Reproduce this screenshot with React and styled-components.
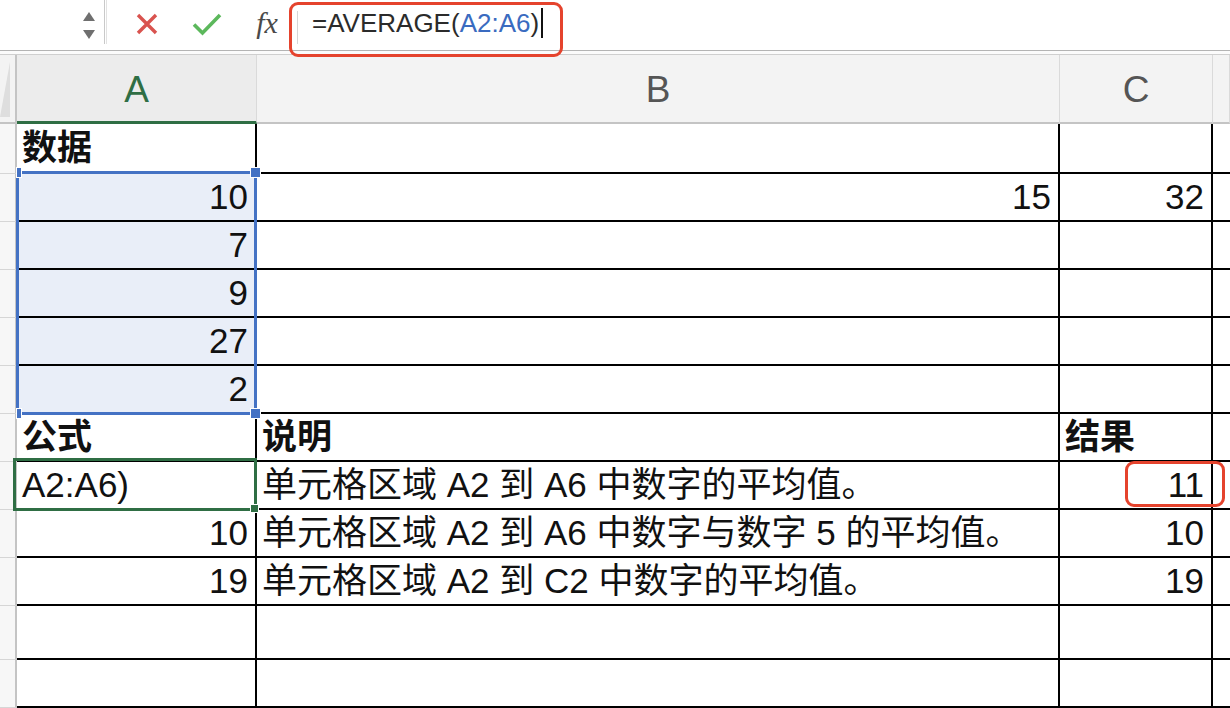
import React from "react";
import styled, { createGlobalStyle } from "styled-components";

const GlobalStyle = createGlobalStyle`
  html, body { margin: 0; padding: 0; background: #fff; overflow: hidden; }
  * { box-sizing: border-box; }
`;

const FONT = `"Liberation Sans", "Noto Sans CJK SC", Arial, sans-serif`;

const Page = styled.div`
  width: 1230px;
  height: 708px;
  display: flex;
  flex-direction: column;
  font-family: ${FONT};
  color: #111;
`;

const FormulaBar = styled.div`
  height: 51px;
  display: flex;
  align-items: stretch;
  background: #fff;
  border-bottom: 1px solid #b4b4b4;
  position: relative;
  z-index: 3;
`;

const NameBox = styled.div`
  width: 104px;
  display: flex;
  justify-content: flex-end;
  align-items: center;
  padding-right: 9px;
`;

const Spinner = styled.div`
  display: flex;
  flex-direction: column;
  gap: 9px;
  align-items: center;
`;

const Tri = styled.div`
  width: 0;
  height: 0;
  border-left: 6px solid transparent;
  border-right: 6px solid transparent;
  ${(p) => (p.$down ? "border-top: 9px solid #6f6f6f;" : "border-bottom: 9px solid #6f6f6f;")}
`;

const BarDivider = styled.div`
  width: 3px;
  margin-bottom: 6px;
  border-left: 1px solid #c9c9c9;
  border-right: 1px solid #e2e2e2;
`;

const ActionIcon = styled.div`
  width: 60px;
  display: flex;
  align-items: center;
  justify-content: center;
  padding-bottom: 2px;
  margin-left: ${(p) => p.$offset || 0}px;
`;

const Fx = styled.div`
  width: 40px;
  display: flex;
  align-items: center;
  justify-content: center;
  font-family: "Liberation Serif", "DejaVu Serif", serif;
  font-style: italic;
  font-size: 30px;
  color: #4a4a4a;
  padding-bottom: 5px;
  margin-left: 10px;
`;

const FormulaField = styled.div`
  position: relative;
  flex: 1;
  display: flex;
  align-items: center;
  padding-left: 15px;
  margin-left: 10px;
  font-family: ${FONT};
  font-size: 26px;
  color: #2b2b2b;
  padding-bottom: 4px;
  &::before {
    content: "";
    position: absolute;
    left: 0;
    top: 11px;
    bottom: 6px;
    border-left: 1px solid #d6d6d6;
  }
`;

const RangeRef = styled.span`
  color: #3a6bc0;
`;

const Caret = styled.span`
  display: inline-block;
  width: 2px;
  height: 30px;
  background: #111;
  margin-left: 2px;
  vertical-align: middle;
`;

const Highlight = styled.div`
  position: absolute;
  border: 3.5px solid #e5432d;
  border-radius: 9px;
  pointer-events: none;
`;

const FormulaHighlight = styled(Highlight)`
  left: -8px;
  top: 2px;
  width: 274px;
  height: 55px;
`;

const BarGap = styled.div`
  height: 4px;
  background: #fbfbfb;
  border-bottom: 1px solid #cfcfcf;
`;

const SheetWrap = styled.div`
  position: relative;
  flex: 1;
`;

const Grid = styled.div`
  display: grid;
  grid-template-columns: 17px 240px 803px 153px 1fr;
  grid-template-rows: 69px 50px repeat(9, 48px) 54px 48px;
`;

const Corner = styled.div`
  background: #f3f3f3;
  border-right: 2px solid #c4c4c4;
  border-bottom: 2px solid #c4c4c4;
  position: relative;
  &::after {
    content: "";
    position: absolute;
    right: 5px;
    bottom: 5px;
    width: 10px;
    height: 55px;
    background: #dedede;
    clip-path: polygon(100% 0, 100% 100%, 0 100%);
  }
`;

const ColHeader = styled.div`
  background: ${(p) => (p.$active ? "#ececec" : "#f3f3f3")};
  border-right: 1px solid #dadada;
  border-bottom: ${(p) => (p.$active ? "3px solid #2f6e44" : "2px solid #c4c4c4")};
  display: flex;
  align-items: center;
  justify-content: center;
  font-size: 37px;
  color: ${(p) => (p.$active ? "#2f6e44" : "#555")};
  padding-top: ${(p) => (p.$active ? "3px" : "2px")};
`;

const RowHeader = styled.div`
  background: #f7f7f7;
  border-right: 2px solid #c4c4c4;
  border-bottom: 1px solid #d6d6d6;
`;

const Cell = styled.div`
  display: flex;
  align-items: center;
  justify-content: ${(p) => (p.$align === "right" ? "flex-end" : "flex-start")};
  padding: 0 ${(p) => (p.$align === "right" ? "7px" : "4px")} 2px 5px;
  background: ${(p) => (p.$selected ? "#e9eef8" : "#fff")};
  border-right: ${(p) => (p.$edge ? "none" : "2px solid #000")};
  border-bottom: 2px solid #000;
  font-size: 35px;
  font-weight: ${(p) => (p.$bold ? 700 : 400)};
  white-space: nowrap;
  overflow: hidden;
  line-height: 1;
`;

const Selection = styled.div`
  position: absolute;
  left: 16px;
  top: 116px;
  width: 241px;
  height: 244px;
  border: 3px solid #4472c4;
  pointer-events: none;
`;

const Handle = styled.div`
  position: absolute;
  width: ${(p) => (p.$left ? "6px" : "11px")};
  height: 11px;
  background: #4472c4;
  border: 1px solid #fff;
  ${(p) => (p.$left ? "left: -3px;" : "right: -7px;")}
  ${(p) => (p.$bottom ? "bottom: -7px;" : "top: -7px;")}
`;

const ActiveCell = styled.div`
  position: absolute;
  left: 13px;
  top: 403px;
  width: 244px;
  height: 53px;
  border: 3px solid #2f6e44;
  pointer-events: none;
  &::after {
    content: "";
    position: absolute;
    right: -5px;
    bottom: -5px;
    width: 7px;
    height: 7px;
    background: #2f6e44;
    border: 1px solid #fff;
  }
`;

const ResultHighlight = styled(Highlight)`
  left: 1125px;
  top: 406px;
  width: 100px;
  height: 46px;
`;

const rows = [
  { a: "数据", aBold: true },
  { a: "10", b: "15", c: "32", sel: true },
  { a: "7", sel: true },
  { a: "9", sel: true },
  { a: "27", sel: true },
  { a: "2", sel: true },
  { a: "公式", b: "说明", c: "结果", aBold: true, bBold: true, cBold: true },
  { a: "A2:A6)", b: "单元格区域 A2 到 A6 中数字的平均值。", c: "11" },
  { a: "10", b: "单元格区域 A2 到 A6 中数字与数字 5 的平均值。", c: "10" },
  { a: "19", b: "单元格区域 A2 到 C2 中数字的平均值。", c: "19" },
  {},
  {},
];

const isNum = (v) => v !== undefined && /^\d+$/.test(v);

export default function App() {
  return (
    <>
      <GlobalStyle />
      <Page>
        <FormulaBar>
          <NameBox>
            <Spinner>
              <Tri />
              <Tri $down />
            </Spinner>
          </NameBox>
          <BarDivider />
          <ActionIcon $offset={10}>
            <svg width="22" height="22" viewBox="0 0 22 22">
              <path d="M2 2 L20 20 M20 2 L2 20" stroke="#d9534f" strokeWidth="3.4" />
            </svg>
          </ActionIcon>
          <ActionIcon>
            <svg width="30" height="24" viewBox="0 0 30 24">
              <path d="M2 12.5 L10.5 21 L28 3" stroke="#5cb85c" strokeWidth="3.6" fill="none" />
            </svg>
          </ActionIcon>
          <Fx>fx</Fx>
          <FormulaField>
            =AVERAGE(<RangeRef>A2:A6</RangeRef>)<Caret />
            <FormulaHighlight />
          </FormulaField>
        </FormulaBar>
        <BarGap />
        <SheetWrap>
          <Grid>
            <Corner />
            <ColHeader $active>A</ColHeader>
            <ColHeader>B</ColHeader>
            <ColHeader>C</ColHeader>
            <ColHeader />
            {rows.map((r, i) => (
              <React.Fragment key={i}>
                <RowHeader />
                <Cell
                  $selected={r.sel}
                  $bold={r.aBold}
                  $align={isNum(r.a) ? "right" : "left"}
                >
                  {r.a}
                </Cell>
                <Cell $bold={r.bBold} $align={isNum(r.b) ? "right" : "left"}>
                  {r.b}
                </Cell>
                <Cell $bold={r.cBold} $align={isNum(r.c) ? "right" : "left"}>
                  {r.c}
                </Cell>
                <Cell $edge />
              </React.Fragment>
            ))}
          </Grid>
          <Selection>
            <Handle $left />
            <Handle />
            <Handle $left $bottom />
            <Handle $bottom />
          </Selection>
          <ActiveCell />
          <ResultHighlight />
        </SheetWrap>
      </Page>
    </>
  );
}
